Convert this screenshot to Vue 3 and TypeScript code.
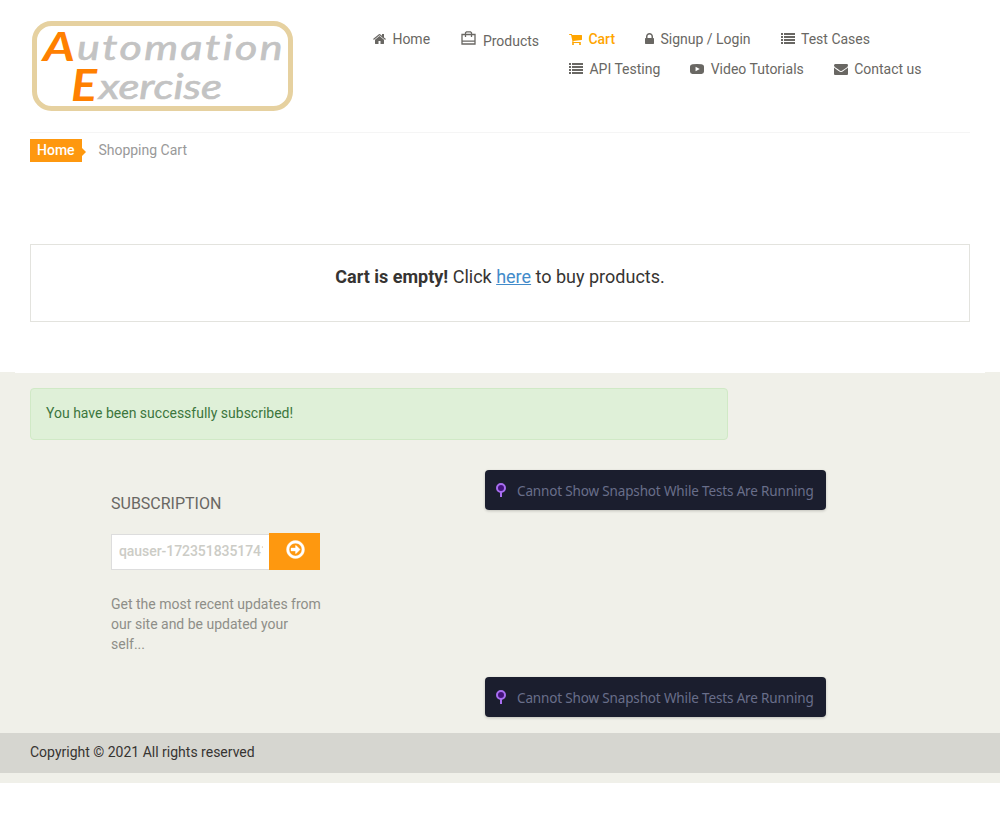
<script setup lang="ts">
import { ref } from 'vue'

interface NavItem {
  label: string
  viewBox: string
  width: number
  paths: string[]
  active?: boolean
  tall?: boolean
}

const listPath =
  'M0 128h256v240H0zM384 128h1408v240H384zM0 512h256v240H0zM384 512h1408v240H384zM0 896h256v240H0zM384 896h1408v240H384zM0 1280h256v240H0zM384 1280h1408v240H384z'

const leading: NavItem[] = [
  {
    label: 'Home',
    viewBox: '64 0 1664 1792',
    width: 13,
    paths: [
      'M1472 992v480q0 26-19 45t-45 19h-384v-384h-256v384h-384q-26 0-45-19t-19-45v-480q0-1 .5-3t.5-3l575-474 575 474q1 2 1 6zm223-69l-62 74q-8 9-21 11h-3q-13 0-21-7l-692-577-692 577q-12 8-24 7-13-2-21-11l-62-74q-8-10-7-23.5t11-21.5l719-599q32-26 76-26t76 26l244 204v-195q0-14 9-23t23-9h192q14 0 23 9t9 23v408l219 182q10 8 11 21.5t-7 23.5z',
    ],
  },
  { label: 'Products', viewBox: '0 0 14 14', width: 14, paths: [], tall: true },
]

const trailing: NavItem[] = [
  {
    label: 'Cart',
    viewBox: '64 0 1664 1792',
    width: 13,
    active: true,
    paths: [
      'M704 1536q0 52-38 90t-90 38-90-38-38-90 38-90 90-38 90 38 38 90zm896 0q0 52-38 90t-90 38-90-38-38-90 38-90 90-38 90 38 38 90zm128-1088v512q0 24-16.500 42.500t-40.500 21.500l-1044 122q13 60 13 70 0 16-24 64h920q26 0 45 19t19 45-19 45-45 19h-1024q-26 0-45-19t-19-45q0-11 8-31.500t16-36 21.500-40 15.500-29.500l-177-823h-204q-26 0-45-19t-19-45 19-45 45-19h256q16 0 28.500 6.500t19.500 15.500 13 24.500 8 26 5.500 29.500 4.500 26h1201q26 0 45 19t19 45z',
    ],
  },
  {
    label: 'Signup / Login',
    viewBox: '320 0 1152 1792',
    width: 9,
    paths: [
      'M640 768h512v-192q0-106-75-181t-181-75-181 75-75 181v192zm832 96v576q0 40-28 68t-68 28h-960q-40 0-68-28t-28-68v-576q0-40 28-68t68-28h32v-192q0-184 132-316t316-132 316 132 132 316v192h32q40 0 68 28t28 68z',
    ],
  },
  { label: 'Test Cases', viewBox: '0 0 1792 1792', width: 14, paths: [listPath] },
  { label: 'API Testing', viewBox: '0 0 1792 1792', width: 14, paths: [listPath] },
  {
    label: 'Video Tutorials',
    viewBox: '0 0 1792 1792',
    width: 14,
    paths: [
      'M320 272Q896 236 1472 272Q1792 292 1792 580V1212Q1792 1500 1472 1520Q896 1556 320 1520Q0 1500 0 1212V580Q0 292 320 272ZM711 600V1180L1250 890Z',
    ],
  },
  {
    label: 'Contact us',
    viewBox: '0 0 1792 1792',
    width: 14,
    paths: [
      'M1792 710v794q0 66-47 113t-113 47h-1472q-66 0-113-47t-47-113v-794q44 49 101 87 362 246 497 345 57 42 92.500 65.500t94.500 48 110 24.500h2q51 0 110-24.500t94.500-48 92.500-65.500q170-123 498-345 57-39 100-87zm0-294q0 79-49 151t-122 123q-376 261-468 325-10 7-42.500 31t-54 38.500-52 32.500-57.500 27-50 9h-2q-23 0-50-9t-57.500-27-52-32.500-54-38.500-42.500-31q-91-64-262-182.500t-205-142.500q-62-42-117-115.500t-55-136.500q0-78 41.500-130t118.500-52h1472q65 0 112.500 47t47.500 113z',
    ],
  },
]

const groups = [leading, trailing]
const email = ref('qauser-1723518351741@example.com')
const frames = [0, 1]
</script>

<template>
  <div class="page">
    <header class="header">
      <svg class="logo" viewBox="0 0 264 92" role="img" aria-label="Automation Exercise">
        <rect x="4.500" y="3.500" width="256" height="85" rx="17" fill="#fff" stroke="#e6d1a0" stroke-width="5" />
        <g class="logo-text">
          <text x="13" y="41" font-size="41" textLength="32" lengthAdjust="spacingAndGlyphs">A</text>
          <text x="47" y="40" font-size="35" textLength="208" lengthAdjust="spacingAndGlyphs" class="grey wide">utomation</text>
          <text x="41" y="81" font-size="43" textLength="26" lengthAdjust="spacingAndGlyphs">E</text>
          <text x="69" y="79" font-size="35" textLength="123" lengthAdjust="spacingAndGlyphs" class="grey">xercise</text>
        </g>
      </svg>
      <nav class="nav">
        <ul v-for="(group, g) in groups" :key="g" class="nav-group">
          <li v-for="item in group" :key="item.label" class="nav-item" :class="{ active: item.active, tall: item.tall }">
            <svg v-if="item.tall" class="case" width="15" height="14" viewBox="0 0 15 14">
              <path d="M1 3.500h13v9.500H1zM4.500 3.500V1.800L5.500 .8h4l1 1V3.500M1 10.200h13M4.500 4v2M10.500 4v2" fill="none" stroke="currentColor" stroke-width="1.300" />
            </svg>
            <svg v-else :width="item.width" height="14" :viewBox="item.viewBox">
              <path v-for="(d, i) in item.paths" :key="i" :d="d" fill="currentColor" fill-rule="evenodd" />
            </svg>
            <a>{{ item.label }}</a>
          </li>
        </ul>
      </nav>
    </header>

    <main class="main">
      <ol class="crumbs">
        <li class="crumb-home">Home</li>
        <li>Shopping Cart</li>
      </ol>
      <section class="empty">
        <p><b>Cart is empty!</b> Click <u>here</u> to buy products.</p>
      </section>
    </main>

    <footer class="footer">
      <div class="rule"></div>
      <div class="alert">You have been successfully subscribed!</div>
      <div class="columns">
        <div class="widget">
          <h2>Subscription</h2>
          <form class="form" @submit.prevent>
            <input v-model="email" type="text" aria-label="Email" />
            <button type="submit" aria-label="Subscribe">
              <svg width="21" height="21" viewBox="0 0 1792 1792">
                <path fill="#fff" stroke="#fff" stroke-width="30" d="M1280 896q0 14-9 23l-320 320q-9 9-23 9-13 0-22.500-9.500t-9.500-22.500v-192h-352q-13 0-22.500-9.500t-9.500-22.500v-192q0-13 9.500-22.500t22.500-9.500h352v-192q0-14 9-23t23-9q12 0 24 10l319 319q9 9 9 23zm160 0q0-148-73-273t-198-198-273-73-273 73-198 198-73 273 73 273 198 198 273 73 273-73 198-198 73-273zm224 0q0 209-103 385.500t-279.500 279.500-385.500 103-385.500-103-279.500-279.500-103-385.500 103-385.500 279.500-279.500 385.500-103 385.500 103 279.500 279.500 103 385.500z" />
              </svg>
            </button>
          </form>
          <p>Get the most recent updates from<br />our site and be updated your<br />self...</p>
        </div>
        <div class="notices">
          <div v-for="f in frames" :key="f" class="notice">
            <svg width="12" height="16" viewBox="0 0 12 16">
              <path d="M6 9v6" stroke="#a86ef0" stroke-width="2" />
              <circle cx="6" cy="6" r="4" fill="#44137c" stroke="#a86ef0" stroke-width="2" />
            </svg>
            <span>Cannot Show Snapshot While Tests Are Running</span>
          </div>
        </div>
      </div>
      <div class="copyright">Copyright © 2021 All rights reserved</div>
    </footer>
  </div>
</template>

<style>
body {
  margin: 0;
  background: #fff;
}
</style>

<style scoped>
.page {
  height: 813px;
  overflow: hidden;
  background: #fff;
  font: 400 14px/20px Roboto, sans-serif;
  color: #696763;
}
.header {
  display: flex;
  box-sizing: border-box;
  height: 133px;
  margin: 0 30px;
  padding-top: 20px;
  border-bottom: 1px solid #f5f5f5;
}
.logo {
  flex: none;
  width: 264px;
  height: 92px;
}
.logo-text {
  font-family: Lato, sans-serif;
  font-style: italic;
  font-weight: 700;
  font-variant-ligatures: none;
  fill: #ff8000;
}
.grey {
  font-weight: 400;
  fill: #c3c3c3;
  stroke: #c3c3c3;
  stroke-width: 0.7;
}
.wide {
  letter-spacing: 2px;
}
.nav {
  display: flex;
  gap: 30px;
  margin: 9px 0 0 79px;
}
.nav-group {
  display: flex;
  flex-wrap: wrap;
  align-content: flex-start;
  gap: 10px 30px;
  margin: 0;
  padding: 0;
  list-style: none;
}
.nav-group:last-child {
  width: 372px;
}
.nav-item {
  display: flex;
  align-items: center;
  gap: 6.4px;
  height: 20px;
  white-space: nowrap;
}
.nav-item svg {
  flex: none;
}
.tall {
  height: 24px;
  gap: 7px;
  margin-left: 0.8px;
}
.tall .case {
  margin-bottom: 6px;
}
.active {
  color: #ffa500;
}
.active a {
  font-weight: 500;
}
.main {
  height: 239px;
  padding: 6px 30px 0;
  box-sizing: border-box;
}
.crumbs {
  display: flex;
  margin: 0;
  padding: 0;
  list-style: none;
  line-height: 23px;
  color: #999;
}
.crumb-home {
  position: relative;
  margin-right: 16.8px;
  padding: 0 7px;
  background: #fe980f;
  color: #fff;
  font-weight: 500;
}
.crumb-home::after {
  content: '';
  position: absolute;
  left: 100%;
  top: 9px;
  border: 4px solid transparent;
  border-right: 0;
  border-left-color: #fe980f;
}
.empty {
  box-sizing: border-box;
  height: 78px;
  margin-top: 82px;
  padding-top: 19px;
  border: 1px solid #e3e3de;
  text-align: center;
  font-size: 18px;
  line-height: 26px;
  color: #363432;
}
.empty p {
  margin: 0;
}
.empty u {
  color: #428bca;
}
.footer {
  height: 411px;
  background: #f0f0e9;
}
.rule {
  height: 1px;
  margin: 0 15px;
  background: #fff;
}
.alert {
  box-sizing: border-box;
  width: 698px;
  height: 52px;
  margin: 15px 0 0 30px;
  padding: 14px 15px;
  border: 1px solid #d0e9c6;
  border-radius: 4px;
  background: #dff0d8;
  color: #3c763d;
}
.columns {
  display: flex;
  height: 293px;
}
.widget {
  width: 214px;
  margin: 54px 160px 0 111px;
}
.widget h2 {
  margin: 0 0 19px;
  font-size: 16px;
  font-weight: 400;
  line-height: 19px;
  text-transform: uppercase;
}
.form {
  display: flex;
  align-items: flex-end;
  height: 38px;
}
.form input {
  box-sizing: border-box;
  width: 158px;
  height: 36px;
  margin: 0;
  padding: 0 6px 2px 7px;
  border: 1px solid #ddd;
  border-right: 0;
  border-radius: 0;
  outline: none;
  background: #fff;
  color: #ccccc6;
  font: 500 14px Roboto, sans-serif;
  letter-spacing: -0.06px;
}
.form button {
  display: flex;
  justify-content: center;
  width: 51px;
  height: 37px;
  margin: 0;
  padding: 6px 0 0 1px;
  border: 0;
  background: #fe980f;
}
.widget p {
  margin: 24px 0 0;
  color: #8e8e88;
  white-space: nowrap;
}
.notices {
  display: flex;
  flex-direction: column;
  gap: 167px;
  padding-top: 30px;
}
.notice {
  display: flex;
  align-items: center;
  box-sizing: border-box;
  width: 341px;
  height: 40px;
  padding: 2px 10px 0;
  gap: 10px;
  border-radius: 4px;
  background: #1b1e2e;
  box-shadow: 0 1px 3px rgba(0, 0, 0, 0.2);
  color: #696e8a;
  font-family: 'Noto Sans', sans-serif;
  font-size: 13.5px;
  letter-spacing: -0.15px;
  white-space: nowrap;
}
.notice svg {
  flex: none;
  margin-bottom: 2px;
}
.copyright {
  height: 40px;
  padding-left: 30px;
  background: #d6d6d0;
  line-height: 39px;
  color: #363432;
}
</style>
